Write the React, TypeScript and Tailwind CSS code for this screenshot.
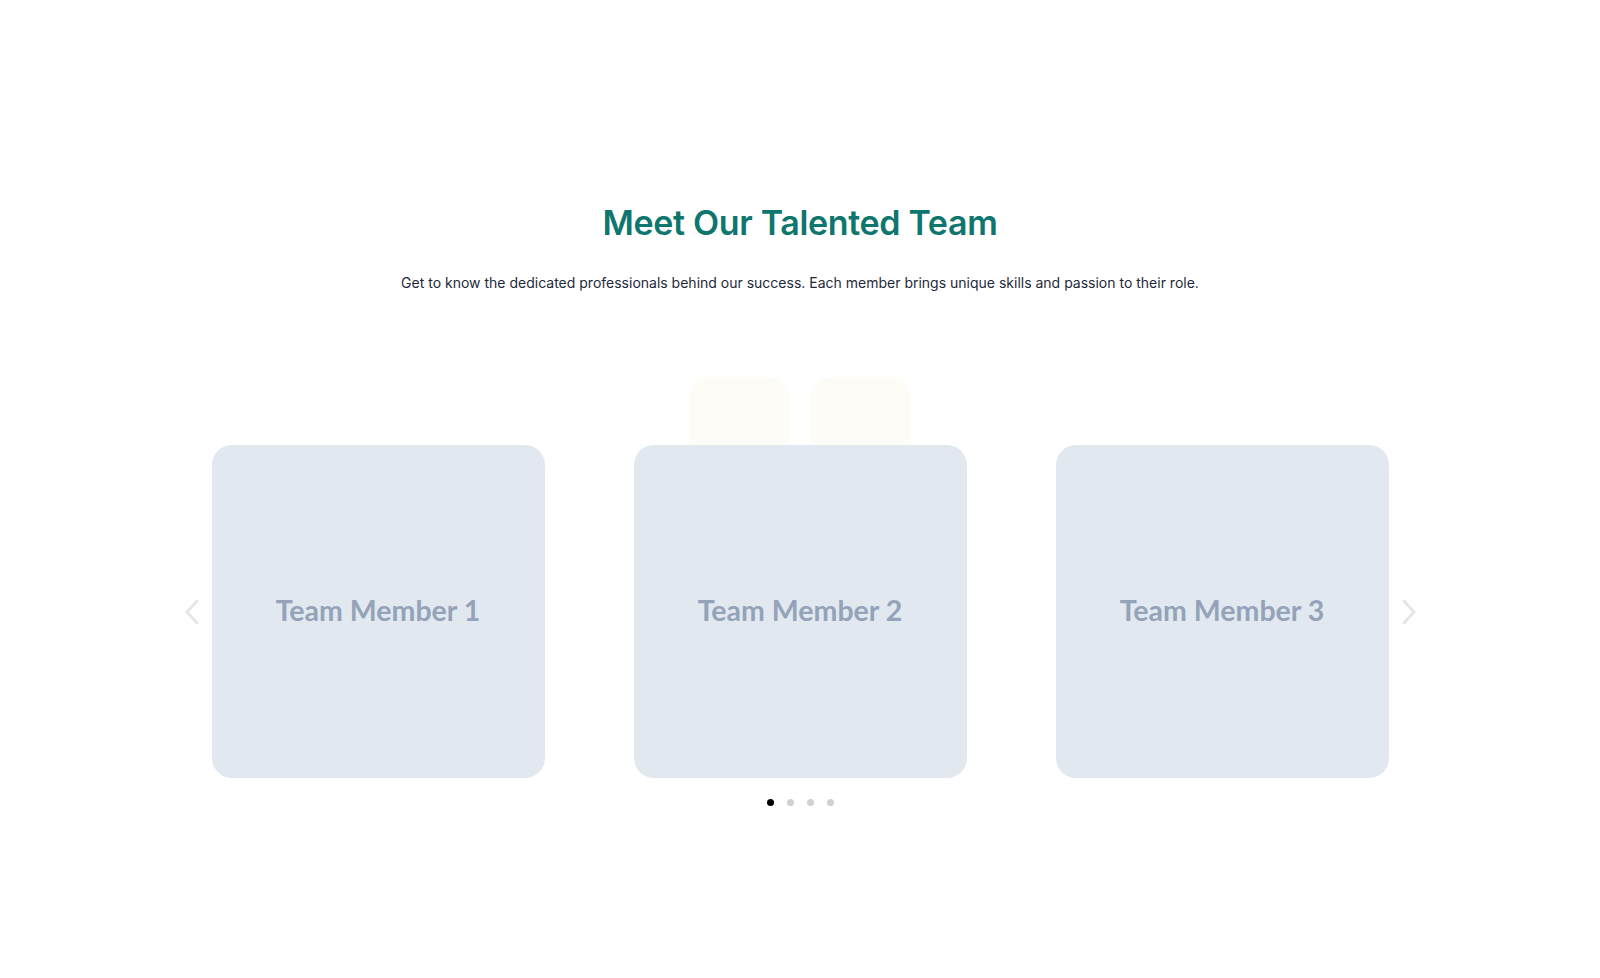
import React, { useState } from "react";

const members = ["Team Member 1", "Team Member 2", "Team Member 3"];

function Chevron({ dir }: { dir: "left" | "right" }) {
    return (
        <svg width="16" height="26" viewBox="0 0 16 26" fill="none" className="text-[#e6e6e6]">
            <path
                d={dir === "left" ? "M13 2 L3 13 L13 24" : "M3 2 L13 13 L3 24"}
                stroke="currentColor"
                strokeWidth="3"
                strokeLinecap="round"
                strokeLinejoin="round"
            />
        </svg>
    );
}

export default function App() {
    const [active, setActive] = useState(0);

    return (
        <div className="min-h-screen bg-white flex flex-col items-center pt-[201px]">
            <h2
                className="text-[34px] leading-[44px] font-semibold text-[#0f766e] tracking-[-0.01em]"
                style={{ fontFamily: "Inter, 'Noto Sans', sans-serif" }}
            >
                Meet Our Talented Team
            </h2>
            <p
                className="mt-[26px] text-[14px] leading-6 text-[#1e293b]"
                style={{ fontFamily: "Inter, 'Noto Sans', sans-serif" }}
            >
                Get to know the dedicated professionals behind our success. Each member brings unique skills and passion to their role.
            </p>

            {/* peeking slides behind the track */}
            <div className="mt-[82px] flex gap-[22px]">
                <div className="w-[100px] h-[68px] rounded-t-[20px] bg-[#fdfcf7]" />
                <div className="w-[100px] h-[68px] rounded-t-[20px] bg-[#fdfcf7]" />
            </div>

            {/* slider */}
            <div className="flex items-center">
                <button className="w-[40px] h-[40px] flex items-center justify-center">
                    <Chevron dir="left" />
                </button>
                <div className="flex gap-[89px]">
                    {members.map((name) => (
                        <div
                            key={name}
                            className="w-[333px] h-[333px] rounded-[20px] bg-[#e2e8f0] flex items-center justify-center"
                        >
                            <span
                                className="text-[28.5px] leading-none font-bold text-[#94a3b8] -translate-y-[1px]"
                                style={{ fontFamily: "Lato, 'Open Sans', sans-serif" }}
                            >
                                {name}
                            </span>
                        </div>
                    ))}
                </div>
                <button className="w-[40px] h-[40px] flex items-center justify-center">
                    <Chevron dir="right" />
                </button>
            </div>

            {/* dots */}
            <div className="mt-[21px] flex gap-[13px]">
                {[0, 1, 2, 3].map((i) => (
                    <button
                        key={i}
                        onClick={() => setActive(i)}
                        className={`w-[7px] h-[7px] rounded-full ${i === active ? "bg-black" : "bg-[#d1d1d1]"}`}
                    />
                ))}
            </div>
        </div>
    );
}
